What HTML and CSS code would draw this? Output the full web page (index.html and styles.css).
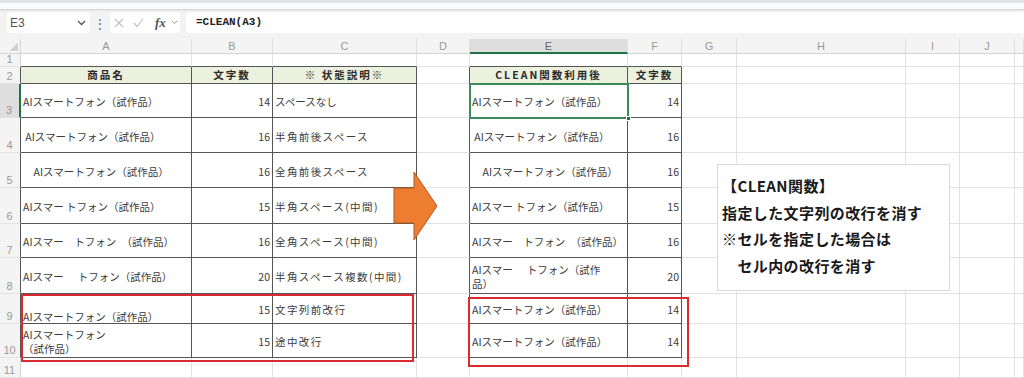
FILE: index.html
```html
<!DOCTYPE html>
<html lang="ja">
<head>
  <meta charset="UTF-8">
  <meta name="viewport" content="width=device-width, initial-scale=1.0">
  <title>CLEAN関数</title>
  <link rel="stylesheet" href="styles.css">
</head>
<body>
  <div class="ribbon-edge"></div>

  <!-- Formula Bar -->
  <div class="formula-bar">
    <div class="name-box">
      <span>E3</span>
      <svg class="chev" width="9" height="6" viewBox="0 0 9 6"><polyline points="1,1 4.5,4.5 8,1" /></svg>
    </div>
    <div class="bar-dots">⋮</div>
    <div class="fx-box">
      <svg class="cancel" width="10" height="10" viewBox="0 0 10 10"><path d="M1 1 L9 9 M9 1 L1 9" /></svg>
      <svg class="enter" width="11" height="10" viewBox="0 0 11 10"><polyline points="1,5 4,8.5 10,1" /></svg>
      <span class="fx">fx</span>
      <svg class="chev small" width="7" height="5" viewBox="0 0 7 5"><polyline points="1,1 3.5,3.5 6,1" /></svg>
    </div>
    <div class="formula-input">=CLEAN(A3)</div>
  </div>

  <!-- Sheet -->
  <div class="sheet-wrap">
    <div class="sheet">
      <div class="corner"></div><div class="h">A</div><div class="h">B</div><div class="h">C</div><div class="h">D</div><div class="h sel">E</div><div class="h">F</div><div class="h">G</div><div class="h">H</div><div class="h">I</div><div class="h">J</div><div class="h"></div>

      <div class="r">1</div><div class="tp"></div><div class="tp"></div><div class="tp"></div><div></div><div class="tp"></div><div class="tp"></div><div></div><div></div><div></div><div></div><div></div>

      <div class="r lt">2</div><div class="th">商品名</div><div class="th">文字数</div><div class="th">※ 状態説明※</div><div class="lt"></div><div class="th">CLEAN関数利用後</div><div class="th">文字数</div><div></div><div></div><div></div><div></div><div></div>

      <div class="r lt sel">3</div><div class="t">AIスマートフォン（試作品）</div><div class="t num">14</div><div class="t">スペースなし</div><div class="lt"></div><div class="t">AIスマートフォン（試作品）</div><div class="t num">14</div><div></div><div></div><div></div><div></div><div></div>

      <div class="r lt">4</div><div class="t"> AIスマートフォン（試作品） </div><div class="t num">16</div><div class="t sp">半角前後スペース</div><div class="lt"></div><div class="t"> AIスマートフォン（試作品） </div><div class="t num">16</div><div></div><div></div><div></div><div></div><div></div>

      <div class="r lt">5</div><div class="t">　AIスマートフォン（試作品）　</div><div class="t num">16</div><div class="t sp">全角前後スペース</div><div class="lt"></div><div class="t">　AIスマートフォン（試作品）　</div><div class="t num">16</div><div></div><div></div><div></div><div></div><div></div>

      <div class="r lt">6</div><div class="t">AIスマー トフォン（試作品）</div><div class="t num">15</div><div class="t sp">半角スペース(中間)</div><div class="lt"></div><div class="t">AIスマー トフォン（試作品）</div><div class="t num">15</div><div></div><div></div><div></div><div></div><div></div>

      <div class="r lt">7</div><div class="t">AIスマー　トフォン　（試作品）</div><div class="t num">16</div><div class="t sp">全角スペース(中間)</div><div class="lt"></div><div class="t">AIスマー　トフォン　（試作品）</div><div class="t num">16</div><div></div><div></div><div></div><div></div><div></div>

      <div class="r lt">8</div><div class="t">AIスマー      トフォン（試作品）</div><div class="t num">20</div><div class="t sp">半角スペース複数(中間)</div><div class="lt"></div><div class="t">AIスマー      トフォン（試作<br>品）</div><div class="t num">20</div><div></div><div></div><div></div><div></div><div></div>

      <div class="r lt">9</div><div class="t"><br>AIスマートフォン（試作品）</div><div class="t num">15</div><div class="t sp">文字列前改行</div><div class="lt"></div><div class="t">AIスマートフォン（試作品）</div><div class="t num">14</div><div></div><div></div><div></div><div></div><div></div>

      <div class="r lt">10</div><div class="t">AIスマートフォン<br>（試作品）</div><div class="t num">15</div><div class="t sp">途中改行</div><div class="lt"></div><div class="t">AIスマートフォン（試作品）</div><div class="t num">14</div><div></div><div></div><div></div><div></div><div></div>

      <div class="r">11</div><div></div><div></div><div></div><div></div><div></div><div></div><div></div><div></div><div></div><div></div><div></div>
    </div>

    <!-- Overlays -->
    <div class="selection"><span class="handle"></span></div>

    <svg class="arrow" width="46" height="70" viewBox="0 0 46 70">
      <polygon points="1,17 21,17 21,1 44,35 21,69 21,52 1,52" />
    </svg>

    <div class="red-box box-left"></div>
    <div class="red-box box-right"></div>

    <div class="note">
      <p>【CLEAN関数】</p>
      <p>指定した文字列の改行を消す</p>
      <p>※セルを指定した場合は</p>
      <p>　セル内の改行を消す</p>
    </div>
  </div>
</body>
</html>
```

FILE: styles.css
```css
* {
  margin: 0;
  padding: 0;
  box-sizing: border-box;
}

body {
  width: 1024px;
  height: 378px;
  overflow: hidden;
  background: #f3f3f3;
  font-family: "Noto Sans CJK JP", sans-serif;
  color: #333;
}

/* Top of ribbon */
.ribbon-edge {
  height: 10px;
  background: #fafafa;
  border-top: 3px solid #e2e5e8;
  border-bottom: 1px solid #d7d7d7;
  box-shadow: 0 1px 2px rgba(0, 0, 0, 0.06);
}

/* Formula bar */
.formula-bar {
  display: flex;
  align-items: center;
  height: 29px;
  padding: 2px 0 6px 7px;
}

.name-box {
  display: flex;
  align-items: center;
  justify-content: space-between;
  width: 83px;
  height: 21px;
  padding: 0 4px 0 3px;
  background: #fff;
  border-radius: 4px;
  font: 12px "Liberation Sans", sans-serif;
  color: #555;
}

.chev polyline {
  fill: none;
  stroke: #555;
  stroke-width: 1.3;
}

.chev.small polyline {
  stroke: #999;
  stroke-width: 1;
}

.bar-dots {
  width: 20px;
  text-align: center;
  font-size: 14px;
  color: #777;
}

.fx-box {
  display: flex;
  align-items: center;
  width: 70px;
  height: 21px;
  padding-left: 4px;
  background: #fff;
  border-radius: 4px;
}

.cancel path,
.enter polyline {
  fill: none;
  stroke: #c2c2c2;
  stroke-width: 1.2;
}

.enter {
  margin-left: 9px;
}

.fx {
  margin-left: 11px;
  width: 13px;
  font: italic bold 13px "Liberation Serif", serif;
  color: #555;
}

.chev.small {
  margin-left: 3px;
}

.formula-input {
  flex: 1;
  height: 21px;
  margin-left: 6px;
  padding-left: 10px;
  background: #fff;
  border-radius: 4px 0 0 4px;
  font: bold 11px/21px "Liberation Mono", monospace;
  color: #222;
}

/* Sheet grid */
.sheet-wrap {
  position: relative;
}

.sheet {
  display: grid;
  grid-template-columns: 21px 171px 81px 144px 53px 158px 54px 55px 169px 54px 55px 9px;
  grid-template-rows: 15px 13px 17px 34px 35px 35px 36px 34px 36px 30px 34px 20px;
  background: #fff;
  font-size: 10.5px;
}

.sheet > div {
  display: flex;
  align-items: center;
  padding: 0 2px;
  border-right: 1px solid #e2e2e2;
  border-bottom: 1px solid #e2e2e2;
  white-space: pre;
  overflow: hidden;
  line-height: 14px;
}

.sheet .corner {
  background: #f4f4f4 linear-gradient(135deg, transparent 50%, #d2d2d2 50%) no-repeat right 2px bottom 2px / 9px 9px;
  border-right-color: #d4d4d4;
  border-bottom-color: #d4d4d4;
}

.sheet .h {
  justify-content: center;
  background: #f4f4f4;
  border-right-color: #e0e0e0;
  border-bottom-color: #d4d4d4;
  font: 11px "Liberation Sans", sans-serif;
  color: #999;
}

.sheet .h.sel {
  background: #dedede;
  border-bottom: 2px solid #217346;
  color: #666;
}

.sheet .r {
  justify-content: center;
  align-items: flex-end;
  padding: 0 1px 0 0;
  background: #f4f4f4;
  border-right-color: #d4d4d4;
  font: 11px/13px "Liberation Sans", sans-serif;
  color: #999;
}

.sheet .tp {
  border-bottom-color: #555;
}

.sheet .lt {
  border-right-color: #555;
}

.sheet .r.sel {
  background: #dedede;
  border-right: 2px solid #217346;
}

.sheet .t,
.sheet .th {
  border-right-color: #555;
  border-bottom-color: #555;
}

.sheet .t {
  padding-top: 3px;
  color: #3b3b3b;
}

.sheet .num {
  justify-content: flex-end;
  padding-right: 2px;
}

.sheet .sp {
  letter-spacing: 1.4px;
}

.sheet .th {
  justify-content: center;
  background: #ebf1de;
  font-weight: bold;
  letter-spacing: 2px;
  color: #2a2a2a;
}

/* Overlays */
.selection {
  position: absolute;
  left: 469px;
  top: 44px;
  width: 160px;
  height: 36px;
  border: 2px solid #3b8a5a;
}

.handle {
  position: absolute;
  right: -4px;
  bottom: -4px;
  width: 5px;
  height: 5px;
  background: #217346;
  border: 1px solid #fff;
}

.arrow {
  position: absolute;
  left: 393px;
  top: 132px;
}

.arrow polygon {
  fill: #ed7d31;
  stroke: #ae5a21;
  stroke-width: 1;
}

.red-box {
  position: absolute;
  border: 2px solid #dc2a2e;
}

.box-left {
  left: 21px;
  top: 255px;
  width: 393px;
  height: 68px;
}

.box-right {
  left: 468px;
  top: 258px;
  width: 221px;
  height: 70px;
}

.note {
  position: absolute;
  left: 717px;
  top: 125px;
  width: 233px;
  height: 127px;
  padding: 8px 0 0 4px;
  background: #fff;
  border: 1px solid #d9d9d9;
  font-size: 15px;
  font-weight: bold;
  line-height: 26.5px;
  letter-spacing: 0.4px;
  color: #1a1a1a;
  white-space: nowrap;
}
```
